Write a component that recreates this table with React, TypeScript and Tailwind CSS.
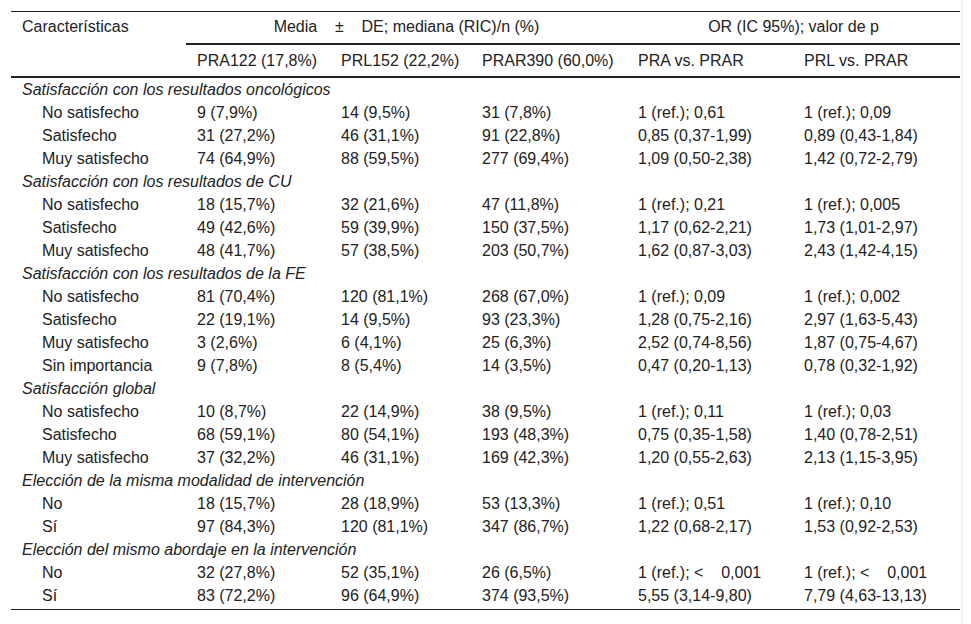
import React from 'react';

type Row = { label: string; group?: boolean; cells?: string[] };

const rows: Row[] = [
  { label: 'Satisfacción con los resultados oncológicos', group: true },
  { label: 'No satisfecho', cells: ['9 (7,9%)', '14 (9,5%)', '31 (7,8%)', '1 (ref.); 0,61', '1 (ref.); 0,09'] },
  { label: 'Satisfecho', cells: ['31 (27,2%)', '46 (31,1%)', '91 (22,8%)', '0,85 (0,37-1,99)', '0,89 (0,43-1,84)'] },
  { label: 'Muy satisfecho', cells: ['74 (64,9%)', '88 (59,5%)', '277 (69,4%)', '1,09 (0,50-2,38)', '1,42 (0,72-2,79)'] },
  { label: 'Satisfacción con los resultados de CU', group: true },
  { label: 'No satisfecho', cells: ['18 (15,7%)', '32 (21,6%)', '47 (11,8%)', '1 (ref.); 0,21', '1 (ref.); 0,005'] },
  { label: 'Satisfecho', cells: ['49 (42,6%)', '59 (39,9%)', '150 (37,5%)', '1,17 (0,62-2,21)', '1,73 (1,01-2,97)'] },
  { label: 'Muy satisfecho', cells: ['48 (41,7%)', '57 (38,5%)', '203 (50,7%)', '1,62 (0,87-3,03)', '2,43 (1,42-4,15)'] },
  { label: 'Satisfacción con los resultados de la FE', group: true },
  { label: 'No satisfecho', cells: ['81 (70,4%)', '120 (81,1%)', '268 (67,0%)', '1 (ref.); 0,09', '1 (ref.); 0,002'] },
  { label: 'Satisfecho', cells: ['22 (19,1%)', '14 (9,5%)', '93 (23,3%)', '1,28 (0,75-2,16)', '2,97 (1,63-5,43)'] },
  { label: 'Muy satisfecho', cells: ['3 (2,6%)', '6 (4,1%)', '25 (6,3%)', '2,52 (0,74-8,56)', '1,87 (0,75-4,67)'] },
  { label: 'Sin importancia', cells: ['9 (7,8%)', '8 (5,4%)', '14 (3,5%)', '0,47 (0,20-1,13)', '0,78 (0,32-1,92)'] },
  { label: 'Satisfacción global', group: true },
  { label: 'No satisfecho', cells: ['10 (8,7%)', '22 (14,9%)', '38 (9,5%)', '1 (ref.); 0,11', '1 (ref.); 0,03'] },
  { label: 'Satisfecho', cells: ['68 (59,1%)', '80 (54,1%)', '193 (48,3%)', '0,75 (0,35-1,58)', '1,40 (0,78-2,51)'] },
  { label: 'Muy satisfecho', cells: ['37 (32,2%)', '46 (31,1%)', '169 (42,3%)', '1,20 (0,55-2,63)', '2,13 (1,15-3,95)'] },
  { label: 'Elección de la misma modalidad de intervención', group: true },
  { label: 'No', cells: ['18 (15,7%)', '28 (18,9%)', '53 (13,3%)', '1 (ref.); 0,51', '1 (ref.); 0,10'] },
  { label: 'Sí', cells: ['97 (84,3%)', '120 (81,1%)', '347 (86,7%)', '1,22 (0,68-2,17)', '1,53 (0,92-2,53)'] },
  { label: 'Elección del mismo abordaje en la intervención', group: true },
  { label: 'No', cells: ['32 (27,8%)', '52 (35,1%)', '26 (6,5%)', '1 (ref.); <    0,001', '1 (ref.); <    0,001'] },
  { label: 'Sí', cells: ['83 (72,2%)', '96 (64,9%)', '374 (93,5%)', '5,55 (3,14-9,80)', '7,79 (4,63-13,13)'] },
];

const widths = [175, 144, 141, 156, 166, 167];

export default function App() {
  return (
    <div
      className="h-screen w-[963px] border-r-2 border-[#f2f2f2] bg-white pl-[11px] pt-[11px] text-[16px] text-[#222]"
      style={{ fontFamily: '"Liberation Sans", Arial, sans-serif' }}
    >
      <div className="w-[949px] border-b border-[#222] pb-[2px]">
        <table className="w-[949px] table-fixed border-separate border-spacing-0">
          <colgroup>
            {widths.map((w, i) => (
              <col key={i} style={{ width: w }} />
            ))}
          </colgroup>
          <thead>
            <tr>
              <th
                rowSpan={2}
                className="border-t border-b-2 border-[#222] px-[11px] pb-[39px] pt-[6px] text-left align-top font-normal leading-[18px]"
              >
                Características
              </th>
              <th
                colSpan={3}
                className="whitespace-pre border-t border-b-2 border-[#222] pb-[7px] pt-[6px] text-center font-normal leading-[18px]"
              >
                {'Media    ±    DE; mediana (RIC)/n (%)'}
              </th>
              <th
                colSpan={2}
                className="border-t border-b-2 border-[#222] pb-[7px] pt-[6px] text-center font-normal leading-[18px]"
              >
                OR (IC 95%); valor de p
              </th>
            </tr>
            <tr>
              {['PRA122 (17,8%)', 'PRL152 (22,2%)', 'PRAR390 (60,0%)', 'PRA vs. PRAR', 'PRL vs. PRAR'].map((h) => (
                <th
                  key={h}
                  className="border-b-2 border-[#222] px-[11px] pb-[6px] pt-[7px] text-left font-normal leading-[18px]"
                >
                  {h}
                </th>
              ))}
            </tr>
          </thead>
          <tbody>
            {rows.map((r, i) =>
              r.group ? (
                <tr key={i}>
                  <td colSpan={6} className="h-[23px] whitespace-nowrap px-[11px] italic leading-[23px]">
                    {r.label}
                  </td>
                </tr>
              ) : (
                <tr key={i}>
                  <td className="h-[23px] whitespace-nowrap pl-[31px] leading-[23px]">{r.label}</td>
                  {r.cells!.map((c, j) => (
                    <td key={j} className="h-[23px] whitespace-pre px-[11px] leading-[23px]">
                      {c}
                    </td>
                  ))}
                </tr>
              )
            )}
          </tbody>
        </table>
      </div>
    </div>
  );
}
